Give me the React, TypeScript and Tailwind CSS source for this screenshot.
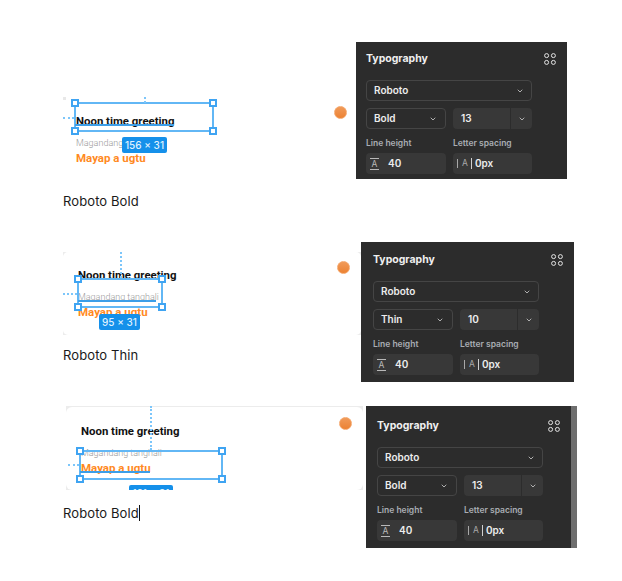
import { ChevronDown } from "lucide-react";
import type { ReactNode } from "react";

const FONT = "font-['Inter','Liberation_Sans',sans-serif]";

function Chevron() {
  return <ChevronDown size={8} strokeWidth={2.6} className="text-[#c4c4c4]" />;
}

function DotsIcon() {
  return (
    <svg width="12" height="12" viewBox="0 0 12 12" fill="none" stroke="#e6e6e6" strokeWidth="1">
      <circle cx="2.6" cy="2.6" r="2" />
      <circle cx="9.4" cy="2.6" r="2" />
      <circle cx="2.6" cy="9.4" r="2" />
      <circle cx="9.4" cy="9.4" r="2" />
    </svg>
  );
}

function Panel({ style, size, className }: { style: string; size: string; className: string }) {
  return (
    <div className={`${FONT} shrink-0 bg-[#2c2c2c] text-[#ececec] ${className}`}>
      <div className="flex items-center justify-between pr-[11px]">
        <span className="text-[10.5px] leading-[12px] font-bold text-[#f0f0f0]">Typography</span>
        <DotsIcon />
      </div>
      <div className="mt-[15px] flex h-[21px] w-[166px] items-center justify-between rounded-[4px] border border-[#454545] pl-[7px] pr-[7px] text-[10px] font-semibold">
        Roboto
        <Chevron />
      </div>
      <div className="mt-[7px] flex gap-[7px]">
        <div className="flex h-[21px] w-[80px] items-center justify-between rounded-[4px] border border-[#454545] pl-[7px] pr-[8px] text-[10px] font-semibold">
          {style}
          <Chevron />
        </div>
        <div className="flex h-[21px] w-[79px] items-center rounded-[4px] bg-[#383838] text-[10px] font-semibold">
          <span className="flex-1 pl-[8px]">{size}</span>
          <span className="flex h-full w-[22px] items-center justify-center border-l border-[#2c2c2c]">
            <Chevron />
          </span>
        </div>
      </div>
      <div className="mt-[8px] flex gap-[7px] text-[8.5px] leading-[12px] font-semibold text-[#a9adb3]">
        <span className="w-[80px]">Line height</span>
        <span className="w-[79px]">Letter spacing</span>
      </div>
      <div className="mt-[4px] flex gap-[7px]">
        <div className="flex h-[21px] w-[80px] items-center gap-[9px] rounded-[4px] bg-[#383838] pl-[4px] text-[10px] font-semibold">
          <span className="w-[9px] border-y border-[#b8b8b8] text-center text-[8.5px] leading-[10px] font-normal text-[#b8b8b8]">A</span>
          40
        </div>
        <div className="flex h-[21px] w-[79px] items-center rounded-[4px] bg-[#383838] pl-[3px] text-[10px] font-semibold">
          <span className="mx-[1px] h-[9px] border-l border-[#a8a8a8]" />
          <span className="px-[3px] text-[8.5px] font-normal text-[#a8a8a8]">A</span>
          <span className="mr-[3px] h-[11px] border-l border-[#d0d0d0]" />
          0px
        </div>
      </div>
    </div>
  );
}

function Handle({ className }: { className: string }) {
  return <span className={`absolute h-[8px] w-[8px] border-2 border-[#3fa4f2] bg-white ${className}`} />;
}

function Selection({
  className,
  hDash,
  vDash,
  underline,
}: {
  className: string;
  hDash: string;
  vDash: string;
  underline: string;
}) {
  return (
    <div className={`absolute border-2 border-[#62b7f5] ${className}`}>
      <span className={`absolute border-t-2 border-dotted border-[#7cc6fa] ${hDash}`} />
      <span className={`absolute border-l-2 border-dotted border-[#7cc6fa] ${vDash}`} />
      <span className={`absolute h-[2px] bg-[#3c9ee8] ${underline}`} />
      <Handle className="-left-[5px] -top-[5px]" />
      <Handle className="-right-[5px] -top-[5px]" />
      <Handle className="-left-[5px] -bottom-[5px]" />
      <Handle className="-right-[5px] -bottom-[5px]" />
    </div>
  );
}

function Size({ className, children }: { className: string; children: ReactNode }) {
  return (
    <span
      className={`${FONT} absolute flex h-[16px] items-center justify-center rounded-[2px] bg-[#1590ea] text-[10px] font-medium text-[#dff1ff] ${className}`}
    >
      {children}
    </span>
  );
}

function Greeting({ className }: { className: string }) {
  return (
    <div className={`font-['Roboto',sans-serif] ${className}`}>
      <div className="text-[11.4px] leading-[16px] font-bold whitespace-nowrap text-[#111]">Noon time greeting</div>
      <div className="mt-[7px] text-[9px] leading-[14px] font-light whitespace-nowrap text-[#9a9a9a]">Magandang tanghali</div>
      <div className="text-[11.5px] leading-[16px] font-bold whitespace-nowrap text-[#ff8a1f]">Mayap a ugtu</div>
    </div>
  );
}

function Dot({ className }: { className: string }) {
  return (
    <span
      className={`absolute h-[13px] w-[13px] rounded-full border border-[#f5a76c] bg-gradient-to-b from-[#f09a58] to-[#ec8232] ${className}`}
    />
  );
}

function Caption({ className, children }: { className: string; children: ReactNode }) {
  return (
    <div className={`font-['Inter',sans-serif] text-[13px] leading-[18px] tracking-[0.1px] text-[#1a1a1a] ${className}`}>
      {children}
    </div>
  );
}

export default function App() {
  return (
    <div className="h-[581px] w-[622px] overflow-hidden bg-white pl-[63px]">
      {/* Row 1 */}
      <div className="flex h-[242px] items-start pt-[42px]">
        <div className="w-[293px] shrink-0 pt-[55px]">
          <div className="relative h-[95px]">
            <span className="absolute left-0 top-0 h-[3px] w-[3px] bg-[#e8e8e8]" />
            <Greeting className="pl-[13px] pt-[16px]" />
            <Selection
              className="left-[11px] top-[5px] h-[30px] w-[140px]"
              hDash="-left-[13px] top-[13px] w-[11px]"
              vDash="left-[68px] -top-[7px] h-[6px]"
              underline="-left-px top-[20px] w-[99px]"
            />
            <Size className="left-[59px] top-[40px] w-[45px]">156 × 31</Size>
            <Dot className="left-[271px] top-[9px]" />
          </div>
          <Caption className="mt-0">Roboto Bold</Caption>
        </div>
        <Panel style="Bold" size="13" className="h-[137px] w-[211px] pl-[10px] pt-[11px]" />
      </div>

      {/* Row 2 */}
      <div className="flex h-[164px] items-start">
        <div className="w-[298px] shrink-0 pt-[10px]">
          <div className="relative h-[83px] bg-[#ececec]">
            <div className="absolute inset-0 rounded-[5px] bg-white" />
            <Greeting className="relative pl-[15px] pt-[15px]" />
            <Selection
              className="left-[14px] top-[26px] h-[30px] w-[86px]"
              hDash="-left-[16px] top-[13px] w-[14px]"
              vDash="left-[41px] -top-[28px] h-[26px]"
              underline="-left-px top-[20px] w-[78px]"
            />
            <Size className="left-[36px] top-[62px] w-[41px]">95 × 31</Size>
            <Dot className="left-[274px] top-[9px]" />
          </div>
          <Caption className="mt-[11px]">Roboto Thin</Caption>
        </div>
        <Panel style="Thin" size="10" className="h-[140px] w-[213px] pl-[12px] pt-[12px]" />
      </div>

      {/* Row 3 */}
      <div className="flex items-start">
        <div className="w-[303px] shrink-0">
          <div className="relative ml-[3px] h-[84px] w-[297px] overflow-hidden bg-[#ececec]">
            <div className="absolute inset-x-0 bottom-0 top-[1px] rounded-[6px] bg-white" />
            <Greeting className="relative pl-[15px] pt-[17px]" />
            <Selection
              className="left-[13px] top-[44px] h-[30px] w-[144px]"
              hDash="-left-[13px] top-[12px] w-[11px]"
              vDash="left-[69px] -top-[46px] h-[44px]"
              underline="-left-px top-[19px] w-[70px]"
            />
            <Size className="left-[63px] top-[79px] w-[44px]">121 × 31</Size>
            <Dot className="left-[273px] top-[11px]" />
          </div>
          <Caption className="mt-[14px] flex items-center">
            Roboto Bold
            <span className="h-[16px] border-l border-[#111]" />
          </Caption>
        </div>
        <div className="flex shrink-0">
          <Panel style="Bold" size="13" className="h-[142px] w-[205px] pl-[11px] pt-[14px]" />
          <div className="h-[142px] w-[6px] bg-[#6e6e6e]" />
        </div>
      </div>
    </div>
  );
}
